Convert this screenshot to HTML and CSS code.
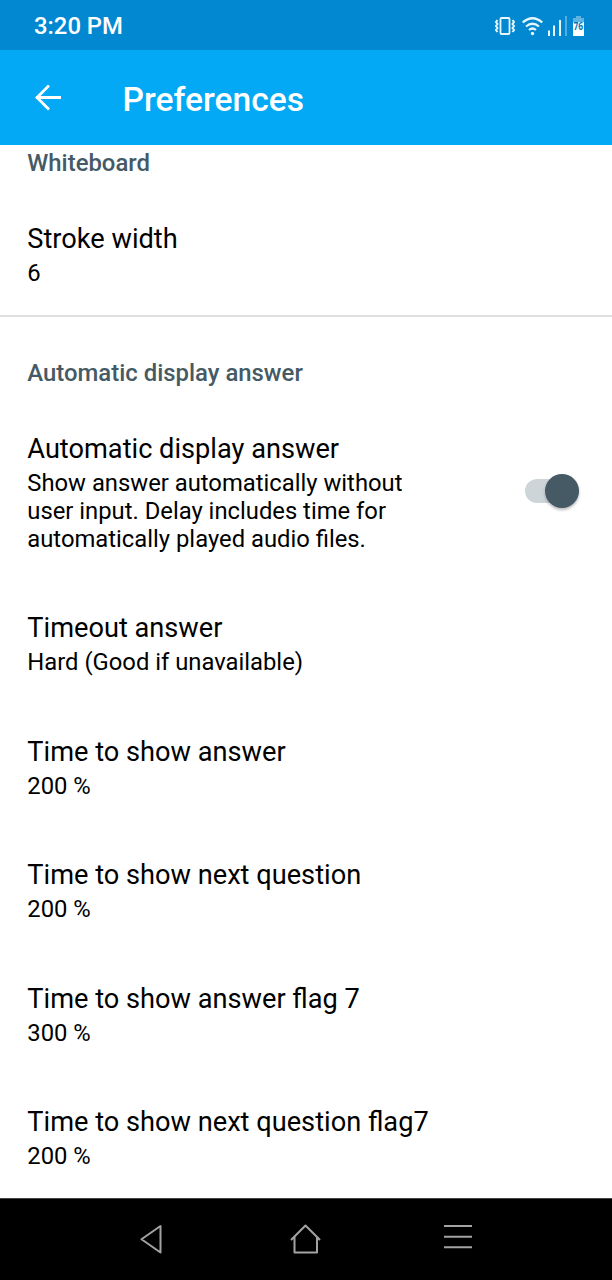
FILE: index.html
```html
<!DOCTYPE html>
<html lang="en">
<head>
<meta charset="utf-8">
<title>Preferences</title>
<link rel="stylesheet" href="styles.css">
</head>
<body>
<div class="status"><span class="clock">3:20 PM</span>
<svg class="status-icons" width="96" height="24" viewBox="492 13 96 24" fill="none" stroke="#e8f6fd">
<rect x="500.500" y="17" width="9" height="16" rx="1" stroke-width="1.800"/>
<path d="M497.500 19l-1.500 2 1.500 2-1.500 2 1.500 2-1.500 2 1.500 2M512.500 19l1.500 2-1.500 2 1.500 2-1.500 2 1.500 2-1.500 2" stroke-width="2"/>
<path d="M522.700 21.500q9.800-8.500 19.600 0M526 25.500q6.500-5.500 13 0M529 29q3.500-3 7 0" stroke-width="2.200"/>
<circle cx="532.500" cy="32.500" r="1.700" fill="#e8f6fd" stroke="none"/>
<path d="M549 29.500V35M554 24.500V35M560 19v16" stroke-width="2"/><path d="M566 15v20" stroke-width="2" opacity=".35"/>
<path d="M573 17h3v-2h5v2h3v4h-11z" fill="#5fb3e0" stroke="none"/><path d="M573 21h11v14h-11z" fill="#fff" stroke="none"/>
<text x="573.500" y="28.500" textLength="9.600" lengthAdjust="spacingAndGlyphs" class="battery-text">76</text>
</svg></div>
<header class="appbar">
<svg width="30" height="30" viewBox="0 0 30 30" fill="none" stroke="#fff" stroke-width="2.800"><path d="M28 14.500H3M16 2.500l-12 12 12 12"/></svg>
<h1>Preferences</h1></header>
<main class="prefs">
<h2>Whiteboard</h2>
<section class="pref"><h3>Stroke width</h3><p>6</p></section>
<hr>
<h2 class="second">Automatic display answer</h2>
<section class="pref switch-row"><div><h3>Automatic display answer</h3><p>Show answer automatically without<br>user input. Delay includes time for<br>automatically played audio files.</p></div><span class="switch"></span></section>
<section class="pref"><h3>Timeout answer</h3><p>Hard (Good if unavailable)</p></section>
<section class="pref"><h3>Time to show answer</h3><p>200 %</p></section>
<section class="pref"><h3>Time to show next question</h3><p>200 %</p></section>
<section class="pref"><h3>Time to show answer flag 7</h3><p>300 %</p></section>
<section class="pref"><h3>Time to show next question flag7</h3><p>200 %</p></section>
</main>
<nav class="navbar">
<svg width="612" height="82" viewBox="0 1198 612 82" fill="none" stroke="#a3a3a3" stroke-width="2"><path d="M160.500 1226v26.500l-19-13.250zM291 1240l14.500-14.500L320 1240M294.500 1237v15.500h22.500V1237M444 1226h28M444 1236.700h28M444 1247.200h28" stroke-linejoin="round"/></svg>
</nav>
</body>
</html>
```
FILE: styles.css
```css
* { box-sizing: border-box; }
body { margin: 0; width: 612px; height: 1280px; display: flex; flex-direction: column; background: #fff; font-family: Roboto, sans-serif; color: #000; overflow: hidden; }
h1, h2, h3, p { margin: 0; white-space: nowrap; }
.status { flex: none; height: 50px; background: #0288d1; color: #fff; display: flex; align-items: center; justify-content: space-between; padding: 1px 24px 0 34px; }
.clock { font-size: 23.850px; font-weight: 500; }
.battery-text { font: 700 10px "Open Sans", sans-serif; fill: #0277b8; stroke: none; }
.appbar { flex: none; height: 95px; background: #03a9f4; display: flex; align-items: center; gap: 59.500px; padding: 0 33px; }
.appbar h1 { font-size: 33.600px; font-weight: 500; color: #fff; padding-top: 3px; }
.prefs { flex: none; height: 1053px; padding-top: 4px; }
h2 { font-size: 23.900px; line-height: 28px; font-weight: 500; color: #455a64; padding-left: 27.300px; margin-bottom: 16px; }
.pref { padding: 29.250px 27.300px; }
.pref h3 { font-size: 27.200px; line-height: 34px; font-weight: 400; }
.pref p { font-size: 23.800px; line-height: 28px; margin-top: 3px; }
hr { margin: -1.500px 0 0; border: 0; height: 2px; background: #e0e0e0; }
.second { margin-top: 41.700px; }
.switch-row { display: flex; justify-content: space-between; }
.switch { position: relative; width: 54px; height: 24px; border-radius: 12px; background: #ced5d8; margin: 47px 5.700px 0 0; }
.switch::after { content: ""; position: absolute; width: 34px; height: 34px; right: 0; top: -5px; border-radius: 50%; background: #455a64; box-shadow: 0 2px 3px #0004; }
.navbar { flex: none; height: 82px; background: #000; border-top: 1px solid #444; }
.navbar svg { display: block; margin-top: -1px; }
```
